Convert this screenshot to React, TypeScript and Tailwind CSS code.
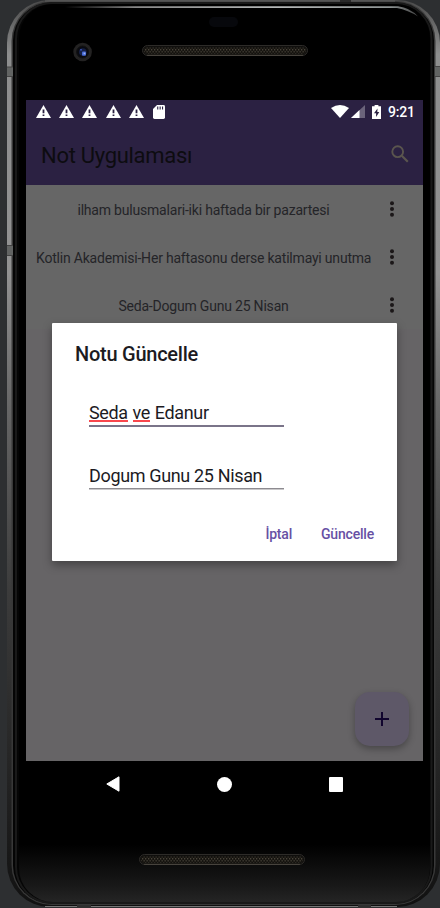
import React from "react";

const notes = [
  "ilham bulusmalari-iki haftada bir pazartesi",
  "Kotlin Akademisi-Her haftasonu derse katilmayi unutma",
  "Seda-Dogum Gunu 25 Nisan",
];

function Warning() {
  return (
    <svg width="15" height="13" viewBox="0 0 15 13" className="shrink-0">
      <path d="M7.5 0 15 13H0Z" fill="#fff" />
      <path d="M6.6 4.6h1.8v3.6H6.6zM6.6 9.5h1.8v1.6H6.6z" fill="#2b2142" />
    </svg>
  );
}

function Grille({ id }: { id: string }) {
  return (
    <svg width="166" height="11" viewBox="0 0 166 11" className="shrink-0">
      <defs>
        <pattern id={id} width="3" height="4" patternUnits="userSpaceOnUse">
          <rect width="3" height="4" fill="#15130f" />
          <rect x="0" y="0" width="1.3" height="1.5" fill="#484339" />
          <rect x="1.5" y="2" width="1.3" height="1.5" fill="#3e3a32" />
        </pattern>
      </defs>
      <rect x="0.5" y="0.5" width="165" height="10" rx="5" fill="#100f0d" stroke="#2d2b28" />
      <rect x="2" y="2.5" width="162" height="6" rx="3" fill={`url(#${id})`} />
      <path d="M5 10.3H161" stroke="#57534a" strokeWidth="0.8" />
    </svg>
  );
}

function Body() {
  return (
    <svg width="440" height="908" viewBox="0 0 440 908" className="absolute inset-0">
      <defs>
        <linearGradient id="side" x1="0" y1="0" x2="0" y2="908" gradientUnits="userSpaceOnUse">
          <stop offset="0" stopColor="#4a4a4a" />
          <stop offset="0.06" stopColor="#8d8e8e" />
          <stop offset="0.3" stopColor="#929292" />
          <stop offset="0.45" stopColor="#666666" />
          <stop offset="0.65" stopColor="#3c3c3c" />
          <stop offset="0.85" stopColor="#242424" />
          <stop offset="1" stopColor="#111" />
        </linearGradient>
        <linearGradient id="glass" x1="0" y1="0" x2="0" y2="908" gradientUnits="userSpaceOnUse">
          <stop offset="0" stopColor="#000" />
          <stop offset="0.93" stopColor="#000" />
          <stop offset="0.975" stopColor="#181818" />
          <stop offset="1" stopColor="#292929" />
        </linearGradient>
        <linearGradient id="shine" x1="65" y1="0" x2="418" y2="0" gradientUnits="userSpaceOnUse">
          <stop offset="0" stopColor="#000" />
          <stop offset="0.2" stopColor="#888" />
          <stop offset="0.6" stopColor="#b5b8b8" />
          <stop offset="0.92" stopColor="#8f9595" />
          <stop offset="1" stopColor="#444" />
        </linearGradient>
      </defs>
      <rect width="440" height="908" fill="#2d2f31" />
      <rect x="7" y="0" width="433" height="907" rx="43" fill="url(#side)" />
      <rect x="11.5" y="1" width="424" height="904" rx="40" fill="#383838" />
      <rect x="13" y="2.5" width="421" height="901" rx="38" fill="#050505" />
      <rect x="16" y="3" width="415.5" height="900" rx="36" fill="none" stroke="#191919" strokeWidth="2" />
      <rect x="19" y="4" width="411" height="898" rx="34" fill="url(#glass)" />
      <path d="M45 1H395" stroke="#606060" strokeWidth="1.2" />
      <path d="M65 6.2H398Q410 7.5 418 16.5Q408 10 397 8H65Z" fill="url(#shine)" />
      <path d="M45 906.5H397" stroke="#777" strokeWidth="1.2" />
      <path d="M77 905h14v3H77zM358 905h13v3h-13z" fill="#303030" />
      <path d="M340 0h11v2h-11z" fill="#292929" />
      <path d="M7 67h6v10H7zM435 66h5v11h-5zM7 245h6v11H7z" fill="#626463" />
      <path d="M7 67h6M7 76.5h6M7 245.5h6M7 255.5h6M435 66.5h5M435 76.5h5" stroke="#444" />
      <rect x="209" y="17" width="29" height="10" rx="5" fill="#07080c" />
    </svg>
  );
}

function Camera() {
  return (
    <svg width="20" height="20" viewBox="0 0 20 20" className="shrink-0">
      <circle cx="9.6" cy="10" r="9.3" fill="#232222" />
      <circle cx="9.6" cy="10" r="6" fill="#090a10" stroke="#111" />
      <circle cx="9.8" cy="10" r="3.8" fill="#162044" />
      <rect x="9" y="9.5" width="4" height="4.2" rx="1" fill="#466bd8" />
      <rect x="10.6" y="10.6" width="1.7" height="1.7" fill="#a4b4f0" />
      <rect x="7.2" y="7" width="1.6" height="1.6" fill="#3751b8" />
    </svg>
  );
}

function StatusBar() {
  return (
    <div className="flex h-[24px] items-center bg-[#2b2142] pb-[1px] pl-[10px] pr-[9px]">
      <div className="flex gap-[8.2px]">
        <Warning />
        <Warning />
        <Warning />
        <Warning />
        <Warning />
      </div>
      <svg width="12" height="14" viewBox="0 0 12 14" className="ml-[9px]">
        <path d="M4 0h6.5Q12 0 12 1.4v11.2Q12 14 10.5 14h-9Q0 14 0 12.6V4Z" fill="#fff" />
        <path d="M4.2 1.5h1.1v3H4.2zM6.6 1.5h1.1v3H6.6zM9 1.5h1.1v3H9z" fill="#2b2142" />
      </svg>
      <div className="grow" />
      <svg width="18" height="13" viewBox="0 0 18 13">
        <path d="M0 3Q9-3 18 3L9 13Z" fill="#fff" />
      </svg>
      <svg width="14" height="13" viewBox="0 0 14 13" className="ml-[2px]">
        <path d="M14 0V13H0Z" fill="#6b647b" />
        <path d="M8.5 5.1V13H0Z" fill="#fff" />
      </svg>
      <svg width="9" height="14" viewBox="0 0 9 14" className="ml-[7px]">
        <path d="M2.6 0h3.8v1.3H9V14H0V1.3h2.6z" fill="#fff" />
        <path d="M5.5 3.5 2 8.3h2.1v3.6L7.3 7H5.3z" fill="#2b2142" />
      </svg>
      <span className="ml-[7px] w-[26px] whitespace-nowrap text-[14px] font-medium leading-[24px] tracking-[-0.2px] text-white">9:21</span>
    </div>
  );
}

function Dialog() {
  return (
    <div className="absolute left-[26px] top-[223px] flex h-[238px] w-[345px] flex-col rounded-[1px] bg-white pl-[23px] pr-[23px] text-[#1c1b1f] shadow-[0_4px_10px_rgba(0,0,0,0.34)]">
      <h2 className="mt-[18px] h-[26px] whitespace-nowrap text-[20px] font-medium leading-[26px] tracking-[-0.25px]">Notu Güncelle</h2>
      <div className="ml-[14px] mt-[33px] h-[27px] w-[195px] border-b-2 border-[#7a7489] text-[18px] leading-[26px] tracking-[-0.35px]">
        <div className="flex h-[24px] gap-[4.8px] whitespace-nowrap">
          <span className="h-[22px] border-b-2 border-[#f9474d]">Seda</span>
          <span className="h-[22px] border-b-2 border-[#f9474d]">ve</span>
          <span>Edanur</span>
        </div>
      </div>
      <div className="ml-[14px] mt-[36px] h-[26px] w-[195px] whitespace-nowrap border-b border-[#8d8b90] text-[18px] leading-[26px] tracking-[-0.35px] shadow-[0_1px_0_#c9c8ca]">
        Dogum Gunu 25 Nisan
      </div>
      <div className="mt-[35px] flex justify-end gap-[29px] whitespace-nowrap text-[14px] font-medium leading-[20px] tracking-[-0.2px] text-[#6750a4]">
        <button>İptal</button>
        <button>Güncelle</button>
      </div>
    </div>
  );
}

export default function App() {
  return (
    <div className="relative h-[908px] w-[440px] overflow-hidden font-[Roboto,sans-serif]">
      <Body />
      <div className="relative flex h-full flex-col pl-[26px]">
        <div className="flex h-[100px] items-start pl-[47px] pt-[42px]">
          <Camera />
          <div className="ml-[49px] mt-[3px]">
            <Grille id="mesh-top" />
          </div>
        </div>
        <div className="relative flex h-[661px] w-[397px] flex-col bg-[#666466]">
          <StatusBar />
          <header className="flex h-[61px] items-center justify-between bg-[#2b2142] pl-[15px] pr-[14px]">
            <h1 className="whitespace-nowrap pt-[2px] text-[22px] leading-[28px] tracking-[-0.3px] text-[#0d0c10]">Not Uygulaması</h1>
            <svg width="18" height="18" viewBox="0 0 18 18" className="mb-[2px]" fill="none" stroke="#5a554e">
              <circle cx="6.7" cy="6.7" r="5.4" strokeWidth="1.9" />
              <path d="m10.8 10.8 6 6" strokeWidth="2.2" />
            </svg>
          </header>
          <ul className="bg-[#666666]">
            {notes.map((text) => (
              <li key={text} className="flex h-[48px] items-center pl-[10px]">
                <span className="w-[335px] whitespace-nowrap pt-[2px] text-center text-[14px] leading-[20px] tracking-[-0.2px] text-[#242428]">
                  {text}
                </span>
                <svg width="6" height="16" viewBox="0 0 6 16" className="ml-[18px]" fill="#1b1718">
                  <circle cx="3" cy="2.2" r="2" />
                  <circle cx="3" cy="8" r="2" />
                  <circle cx="3" cy="13.8" r="2" />
                </svg>
              </li>
            ))}
          </ul>
          <button className="mb-[15px] ml-auto mr-[14px] mt-auto flex h-[54px] w-[54px] items-center justify-center rounded-[15px] bg-[#5e5868] shadow-[0_3px_7px_rgba(0,0,0,0.3)]">
            <svg width="14" height="14" viewBox="0 0 14 14" stroke="#11052e" strokeWidth="2">
              <path d="M7 0v14M0 7h14" />
            </svg>
          </button>
          <Dialog />
        </div>
        <nav className="flex h-[46px] w-[397px] items-center pl-[80px]">
          <svg width="14" height="16" viewBox="0 0 14 16">
            <path d="M13 .8v14.4L.8 8z" fill="#fff" stroke="#fff" strokeLinejoin="round" />
          </svg>
          <span className="ml-[97px] h-[15px] w-[15px] rounded-full bg-white" />
          <span className="ml-[97px] h-[15px] w-[14px] rounded-[1px] bg-white" />
        </nav>
        <div className="mt-[47px] pl-[113px]">
          <Grille id="mesh-bottom" />
        </div>
      </div>
    </div>
  );
}
